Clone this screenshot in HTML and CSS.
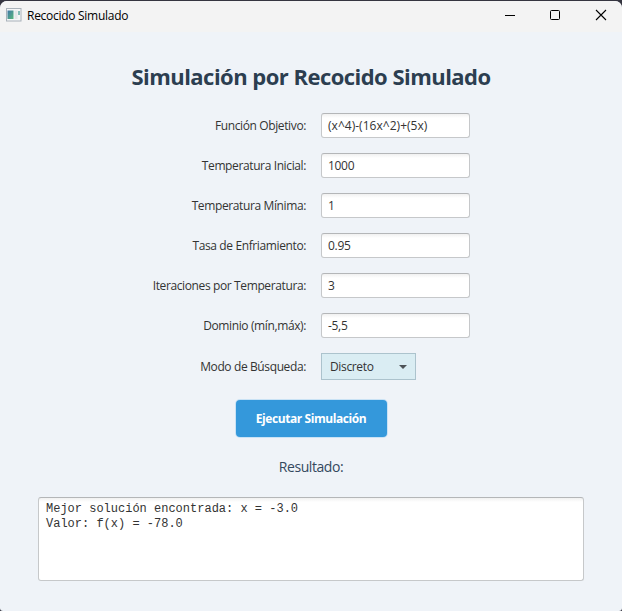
FILE: index.html
```html
<!DOCTYPE html>
<html lang="es">
<head>
<meta charset="utf-8">
<title>Recocido Simulado</title>
<link rel="stylesheet" href="styles.css">
</head>
<body>
<div class="window">
  <header class="titlebar">
    <svg class="app-icon" width="16" height="14" viewBox="0 0 16 14">
      <defs><linearGradient id="g" x1="0" y1="0" x2="1" y2="1"><stop offset="0" stop-color="#4278a8"/><stop offset="1" stop-color="#58b87c"/></linearGradient></defs>
      <rect x=".5" y=".5" width="14.5" height="12.5" fill="#f5f6f7" stroke="#a9b2ba"/>
      <rect x="1.5" y="2.5" width="6" height="8.5" fill="url(#g)"/>
      <rect x="8.5" y="2.5" width="3" height="8.5" fill="#e3e7e9"/>
      <rect x="12" y="3" width="2" height="4" fill="#83bdb7"/>
    </svg>
    <span class="caption">Recocido Simulado</span>
    <div class="controls">
      <svg width="46" height="31" viewBox="0 0 46 31"><path d="M13 14.5h10" stroke="#000"/></svg>
      <svg width="46" height="31" viewBox="0 0 46 31"><rect x="12.5" y="9.5" width="9" height="9" rx="1" fill="none" stroke="#000"/></svg>
      <svg width="46" height="31" viewBox="0 0 46 31"><path d="M12 9l10 10M22 9l-10 10" stroke="#000" stroke-width="1.1"/></svg>
    </div>
  </header>
  <main class="content">
    <h1 class="title"><span>Simulación por Recocido Simulado</span></h1>
    <div class="form">
      <label>Función Objetivo:</label><div class="field formula">(x^4)-(16x^2)+(5x)</div>
      <label>Temperatura Inicial:</label><div class="field">1000</div>
      <label>Temperatura Mínima:</label><div class="field">1</div>
      <label>Tasa de Enfriamiento:</label><div class="field">0.95</div>
      <label>Iteraciones por Temperatura:</label><div class="field">3</div>
      <label>Dominio (mín,máx):</label><div class="field">-5,5</div>
      <label>Modo de Búsqueda:</label><div class="combo"><span>Discreto</span><svg width="8" height="4" viewBox="0 0 8 4"><path d="M0 0h8L4 4z" fill="#4d5357"/></svg></div>
    </div>
    <button class="run">Ejecutar Simulación</button>
    <div class="result-label">Resultado:</div>
    <div class="output">Mejor solución encontrada: x = -3.0
Valor: f(x) = -78.0</div>
  </main>
</div>
</body>
</html>
```
FILE: styles.css
```css
* { box-sizing: border-box; }
body { margin: 0; background: #353540; font-family: "Open Sans", "Noto Sans", sans-serif; font-size: 12px; color: #333; }
.window { height: 610px; margin-top: 1px; border-radius: 7px 7px 3px 3px; overflow: hidden; background: #eff3f8; }
.titlebar { height: 31px; display: flex; align-items: center; background: #f3f3f3; padding-left: 6px; }
.app-icon { margin-top: -3px; }
.caption { margin-left: 5px; margin-top: -3px; color: #000; letter-spacing: -.28px; }
.controls { display: flex; margin-left: auto; margin-right: -8px; }
.content { display: flex; flex-direction: column; align-items: center; }
.title { margin: 28px 0 0; height: 32px; line-height: 32px; font-size: 22px; color: #2c3e50; white-space: nowrap; letter-spacing: -.53px; }
.form { margin-top: 21px; align-self: flex-start; margin-left: 146px; display: grid; grid-template-columns: 160px 149px; column-gap: 15px; row-gap: 15px; align-items: center; }
label { text-align: right; white-space: nowrap; line-height: 25px; letter-spacing: -.38px; }
.field { height: 25px; padding-left: 6px; line-height: 24px; border: 1px solid #c6c8ca; border-top-color: #b4b6b8; border-radius: 3px; background: linear-gradient(#f1f1f1, #fff 4px); letter-spacing: -.3px; }
.formula { letter-spacing: .03px; }
.combo { width: 95px; height: 27px; padding: 0 8px; display: flex; align-items: center; justify-content: space-between; border: 1px solid #acc3cd; background: #daedf3; letter-spacing: -.35px; }
.run { margin-top: 20px; width: 151px; height: 37px; padding: 0; border: 0; border-radius: 4px; background: #3498db; box-shadow: 0 0 0 1px #c9e2f5; color: #fff; font: bold 12px "Open Sans", sans-serif; letter-spacing: -.42px; }
.result-label { margin-top: 20px; height: 20px; line-height: 20px; font-size: 14px; color: #34495e; letter-spacing: -.42px; }
.output { margin-top: 20px; width: 546px; height: 84px; padding: 4px 7px; border: 1px solid #c6c8ca; border-top-color: #b4b6b8; border-radius: 3px; background: linear-gradient(#f1f1f1, #fff 4px); font: 12px/15px "Liberation Mono", monospace; white-space: pre; }
```
